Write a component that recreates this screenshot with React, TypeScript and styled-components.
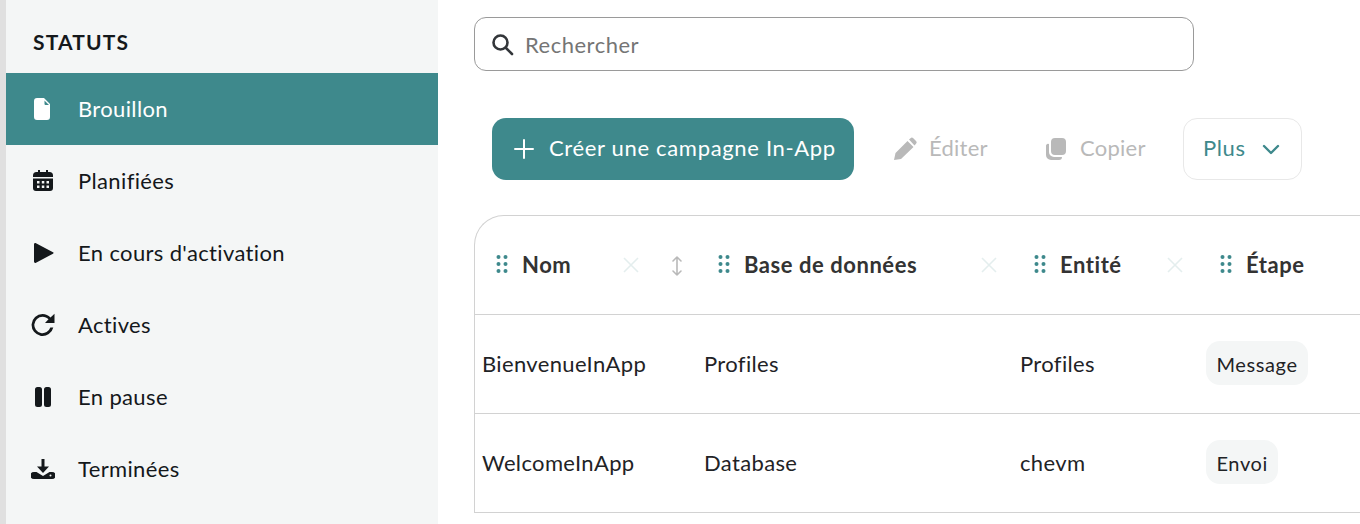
import React from "react";
import styled, { createGlobalStyle } from "styled-components";

const Global = createGlobalStyle`
  html, body { margin: 0; padding: 0; background: #fff; }
  body { font-family: "Lato", "Noto Sans", sans-serif; color: #14181b; }
  * { box-sizing: border-box; }
`;

const Page = styled.div`
  display: flex;
  width: 1360px;
  height: 524px;
  overflow: hidden;
  border-left: 6px solid #e0e0e0;
`;
const Sidebar = styled.aside`
  width: 432px;
  flex: none;
  background: #f4f6f6;
  display: flex;
  flex-direction: column;
  padding-top: 29px;
`;
const SideTitle = styled.h2`
  margin: 0 0 18px 27px;
  height: 26px;
  line-height: 26px;
  font-size: 21px;
  font-weight: 700;
  letter-spacing: 1.15px;
  color: #14181b;
`;
const SideItem = styled.div<{ $active?: boolean }>`
  height: 72px;
  flex: none;
  display: flex;
  align-items: center;
  padding-left: 25px;
  gap: 23px;
  font-size: 22px;
  letter-spacing: 0.36px;
  color: ${(p) => (p.$active ? "#ffffff" : "#14181b")};
  background: ${(p) => (p.$active ? "#3e898c" : "transparent")};
`;
const SideLabel = styled.span`
  margin-top: -2px;
`;
const SideIcon = styled.svg`
  width: 24px;
  height: 24px;
  flex: none;
  fill: currentColor;
`;
const Main = styled.main`
  flex: 1;
  min-width: 0;
  padding: 17px 0 0 36px;
  display: flex;
  flex-direction: column;
`;
const SearchBox = styled.div`
  width: 720px;
  height: 54px;
  flex: none;
  border: 1px solid #9a9a9a;
  border-radius: 12px;
  display: flex;
  align-items: center;
  padding-left: 15px;
  gap: 11px;
  font-size: 22px;
  letter-spacing: 0.5px;
  color: #757575;
`;
const SearchIcon = styled.svg`
  width: 24px;
  height: 24px;
  flex: none;
  fill: none;
  stroke: #33363a;
  stroke-width: 2.6;
  stroke-linecap: round;
`;
const Toolbar = styled.div`
  display: flex;
  align-items: center;
  margin: 47px 0 0 18px;
  height: 62px;
  flex: none;
`;
const PrimaryButton = styled.div`
  width: 362px;
  height: 62px;
  flex: none;
  background: #3e898c;
  border-radius: 14px;
  color: #fff;
  display: flex;
  align-items: center;
  padding-left: 22px;
  gap: 15px;
  font-size: 22px;
  letter-spacing: 0.67px;
  white-space: nowrap;
`;
const ButtonLabel = styled.span`
  margin-top: -3px;
`;
const GhostButton = styled.div<{ $width: number }>`
  width: ${(p) => p.$width}px;
  flex: none;
  display: flex;
  align-items: center;
  gap: 12px;
  padding-left: 39px;
  font-size: 22px;
  letter-spacing: 0.25px;
  color: #b9b9b9;
`;
const GhostIcon = styled.svg`
  width: 24px;
  height: 24px;
  flex: none;
  fill: #b9b9b9;
`;
const MoreButton = styled.div`
  width: 119px;
  height: 62px;
  flex: none;
  border: 1px solid #e8e8e8;
  border-radius: 14px;
  display: flex;
  align-items: center;
  padding-left: 19px;
  gap: 15px;
  font-size: 22px;
  letter-spacing: 0.6px;
  color: #3e898c;
`;
const Chevron = styled.svg`
  width: 20px;
  height: 20px;
  fill: none;
  stroke: #3e898c;
  stroke-width: 2.4;
  stroke-linecap: round;
  stroke-linejoin: round;
`;
const Table = styled.div`
  margin-top: 35px;
  width: 900px;
  border-top: 1px solid #d2d2d2;
  border-left: 1px solid #d2d2d2;
  border-top-left-radius: 30px;
  flex: none;
`;
const Row = styled.div`
  display: grid;
  grid-template-columns: 222px 316px 186px 1fr;
  height: 99px;
  border-bottom: 1px solid #d2d2d2;
  align-items: center;
`;
const HeadCell = styled.div`
  display: flex;
  align-items: center;
  height: 100%;
  padding-left: 21px;
  position: relative;
  font-size: 22px;
  font-weight: 700;
  letter-spacing: 0.55px;
  color: #333;
`;
const HeadLabel = styled.span`
  margin-top: -1px;
`;
const Grip = styled.svg`
  width: 12px;
  height: 18px;
  flex: none;
  fill: #3e898c;
  margin: -3px 14px 0 0;
`;
const CloseIcon = styled.svg<{ $left: number }>`
  position: absolute;
  top: 50%;
  left: ${(p) => p.$left}px;
  margin-top: -10px;
  width: 20px;
  height: 20px;
  stroke: #e4eeee;
  stroke-width: 1.6;
  fill: none;
`;
const SortIcon = styled.svg`
  position: absolute;
  top: 50%;
  margin-top: -11px;
  left: 192px;
  width: 20px;
  height: 24px;
  fill: none;
  stroke: #b9b9b9;
  stroke-width: 1.6;
  stroke-linecap: round;
  stroke-linejoin: round;
`;
const Cell = styled.div`
  padding-left: 7px;
  margin-top: -2px;
  font-size: 22px;
  letter-spacing: 0.35px;
  color: #1f2326;
`;
const Chip = styled.span`
  display: inline-block;
  height: 44px;
  line-height: 46px;
  padding: 0 10.5px;
  border-radius: 14px;
  background: #f4f6f6;
  font-size: 20px;
  letter-spacing: 0.6px;
  color: #1f2326;
`;

const Grp = () => (
  <Grip viewBox="0 0 12 18">
    {[2, 9, 16].map((y) => [2.5, 9.5].map((x) => <circle key={`${x}${y}`} cx={x} cy={y} r="2" />))}
  </Grip>
);
const Close = ({ left }: { left: number }) => (
  <CloseIcon viewBox="0 0 20 20" $left={left}>
    <path d="M3 3l14 14M17 3L3 17" />
  </CloseIcon>
);

const items = [
  { label: "Brouillon", d: "M6 1h7l6 6v13a3 3 0 0 1-3 3H6a3 3 0 0 1-3-3V4a3 3 0 0 1 3-3zm7.5 2.5V7a1 1 0 0 0 1 1H18z" },
  { label: "Planifiées", d: "M7 1h2v2h6V1h2v2h1.5A3.5 3.5 0 0 1 22 6.5V8H2V6.500A3.5 3.5 0 0 1 5.500 3H7zM2 9.500h20V19a3 3 0 0 1-3 3H5a3 3 0 0 1-3-3zM6 12v2.500h2.500V12zm4.800 0v2.500h2.500V12zm4.700 0v2.500H18V12zM6 16.500V19h2.500v-2.500zm4.800 0V19h2.500v-2.500zm4.700 0V19H18v-2.500z" },
  { label: "En cours d'activation", d: "M3 3.500c0-1.200 1-1.800 2-1.200l17 9c.800.400.800 1 0 1.400l-17 9c-1 .600-2 0-2-1.200z" },
  { label: "Actives", d: "M11.500 1A11 11 0 1 0 22.300 14.500H19.300A8.200 8.200 0 1 1 11.500 3.800c2.500 0 4.500 1 6 2.500L14 10h9.500V.8L19.500 4.600A11 11 0 0 0 11.500 1z" },
  { label: "En pause", d: "M6.500 2h2A2.500 2.500 0 0 1 11 4.500v15A2.500 2.500 0 0 1 8.500 22h-2A2.500 2.500 0 0 1 4 19.500v-15A2.500 2.500 0 0 1 6.500 2zm9 0h2A2.500 2.500 0 0 1 20 4.500v15a2.500 2.500 0 0 1-2.500 2.500h-2a2.500 2.500 0 0 1-2.500-2.500v-15A2.500 2.500 0 0 1 15.500 2z" },
  { label: "Terminées", d: "M10.500 2h3v7.500H18L12 16 6 9.500h4.500zM3 15h2.500l6.500 4 6.500-4H21a2.500 2.500 0 0 1 0 7H3a3.500 3.500 0 0 1 0-7zm16.500 2.500a1 1 0 1 0 0 2 1 1 0 0 0 0-2z" },
];

export default function App() {
  return (
    <>
      <Global />
      <Page>
        <Sidebar>
          <SideTitle>STATUTS</SideTitle>
          {items.map((it, i) => (
            <SideItem key={it.label} $active={i === 0}>
              <SideIcon viewBox="0 0 24 24"><path d={it.d} /></SideIcon>
              <SideLabel>{it.label}</SideLabel>
            </SideItem>
          ))}
        </Sidebar>
        <Main>
          <SearchBox>
            <SearchIcon viewBox="0 0 24 24">
              <circle cx="10.500" cy="10.500" r="7" />
              <path d="M16 16l6 6" />
            </SearchIcon>
            Rechercher
          </SearchBox>
          <Toolbar>
            <PrimaryButton>
              <svg width="20" height="20" viewBox="0 0 20 20" fill="none" stroke="#fff" strokeWidth="2" strokeLinecap="round">
                <path d="M10 1v18M1 10h18" />
              </svg>
              <ButtonLabel>Créer une campagne In-App</ButtonLabel>
            </PrimaryButton>
            <GhostButton $width={151}>
              <GhostIcon viewBox="0 0 24 24"><path d="M1 23l1.500-7L14.500 4l6 6L8 22zM16 2.500l1.500-1.300a2 2 0 0 1 2.800 0l2.700 2.700a2 2 0 0 1 0 2.800L21.500 8.500z" /></GhostIcon>
              <ButtonLabel>Éditer</ButtonLabel>
            </GhostButton>
            <GhostButton $width={178}>
              <GhostIcon viewBox="0 0 24 24"><path d="M11 1h7a4 4 0 0 1 4 4v9a4 4 0 0 1-4 4h-7a4 4 0 0 1-4-4V5a4 4 0 0 1 4-4zM2 8.500a2 2 0 0 1 3-1.500v8a5 5 0 0 0 5 5h8a3 3 0 0 1-3 3H7a5 5 0 0 1-5-5z" /></GhostIcon>
              <ButtonLabel>Copier</ButtonLabel>
            </GhostButton>
            <MoreButton>
              <ButtonLabel>Plus</ButtonLabel>
              <Chevron viewBox="0 0 20 20"><path d="M3 7l7 7 7-7" /></Chevron>
            </MoreButton>
          </Toolbar>
          <Table>
            <Row>
              <HeadCell>
                <Grp /><HeadLabel>Nom</HeadLabel>
                <Close left={146} />
                <SortIcon viewBox="0 0 20 24"><path d="M10 3v18M6 7l4-4 4 4M6 17l4 4 4-4" /></SortIcon>
              </HeadCell>
              <HeadCell>
                <Grp /><HeadLabel>Base de données</HeadLabel>
                <Close left={282} />
              </HeadCell>
              <HeadCell>
                <Grp /><HeadLabel>Entité</HeadLabel>
                <Close left={152} />
              </HeadCell>
              <HeadCell>
                <Grp /><HeadLabel>Étape</HeadLabel>
              </HeadCell>
            </Row>
            <Row>
              <Cell>BienvenueInApp</Cell>
              <Cell>Profiles</Cell>
              <Cell>Profiles</Cell>
              <Cell><Chip>Message</Chip></Cell>
            </Row>
            <Row>
              <Cell>WelcomeInApp</Cell>
              <Cell>Database</Cell>
              <Cell>chevm</Cell>
              <Cell><Chip>Envoi</Chip></Cell>
            </Row>
          </Table>
        </Main>
      </Page>
    </>
  );
}
